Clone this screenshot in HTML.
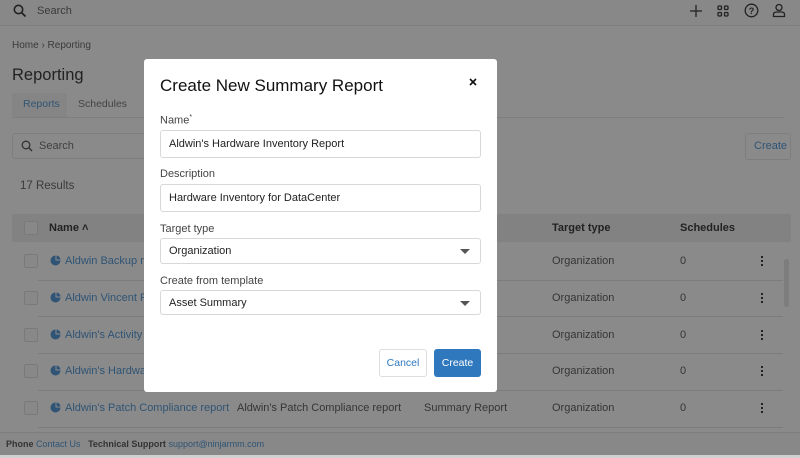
<!DOCTYPE html>
<html style="background:#8a8a8a"><head><style>
*{box-sizing:border-box;margin:0;padding:0}
html,body{background:#8a8a8a}
body{width:800px;height:458px;overflow:hidden;font-family:"Liberation Sans",sans-serif;position:relative;color:#333}
.a{position:absolute}
.t{font-size:11px;color:#353535;white-space:nowrap}
.lnk{color:#2f5475}
.cb{width:14px;height:14px;border:1px solid #7a7a7a;border-radius:2px;background:#888}
.sep{left:38px;width:745px;height:1px;background:#7c7c7c}
.m{background:#fff;border-radius:3px;left:144px;top:59px;width:353px;height:333px}
.lbl{font-size:11px;color:#444}
.inp{border:1px solid #d8d8d8;border-radius:3px;background:#fff;font-size:11px;color:#222;padding-left:8px;display:flex;align-items:center}
.car{position:absolute;right:10px;top:50%;margin-top:-2px;border-left:5px solid transparent;border-right:5px solid transparent;border-top:5px solid #555}
.dots{width:3px;font-size:0}
.dots i{display:block;width:2px;height:2px;background:#222;margin-bottom:2px}
</style></head><body>
<div class="a" style="left:0;top:0;width:800px;height:458px;background:#8a8a8a"></div>
<div class="a" style="left:0;top:0;width:800px;height:26px;background:#888;border-bottom:1px solid #7e7e7e"></div>
<svg class="a" style="left:13px;top:4px" width="14" height="14" viewBox="0 0 14 14"><circle cx="5.5" cy="5.5" r="4.2" fill="none" stroke="#222" stroke-width="1.6"/><path d="M8.5 8.5L12.5 12.5" stroke="#222" stroke-width="1.8"/></svg>
<div class="a t" style="left:37px;top:5px;color:#3a3a3a">Search</div>
<svg class="a" style="left:690px;top:5px" width="12" height="12"><path d="M6 0V12M0 6H12" stroke="#222" stroke-width="1.3"/></svg>
<svg class="a" style="left:717px;top:5px" width="12" height="12"><g fill="none" stroke="#222" stroke-width="1.3"><rect x="1" y="1" width="3.5" height="3.5" rx="1"/><rect x="7.5" y="1" width="3.5" height="3.5" rx="1"/><rect x="1" y="7.5" width="3.5" height="3.5" rx="1"/><rect x="7.5" y="7.5" width="3.5" height="3.5" rx="1"/></g></svg>
<svg class="a" style="left:744px;top:3px" width="15" height="15"><circle cx="7.5" cy="7.5" r="6.3" fill="none" stroke="#222" stroke-width="1.3"/><text x="7.5" y="11" font-size="9" text-anchor="middle" fill="#222" font-family="Liberation Sans" font-weight="bold">?</text></svg>
<svg class="a" style="left:772px;top:3px" width="14" height="15"><circle cx="7" cy="4.5" r="3" fill="none" stroke="#222" stroke-width="1.3"/><path d="M1.5 13.5V11.5Q1.5 9 4.5 9H9.5Q12.5 9 12.5 11.5V13.5Z" fill="none" stroke="#222" stroke-width="1.3"/></svg>
<div class="a t" style="left:12px;top:40px;font-size:10px;color:#3a3a3a">Home › Reporting</div>
<div class="a" style="left:12px;top:66px;font-size:16.5px;color:#222">Reporting</div>
<div class="a" style="left:12px;top:93px;width:55px;height:24px;background:#858585"></div>
<div class="a t lnk" style="left:23px;top:98px;font-size:10.5px">Reports</div>
<div class="a t" style="left:78px;top:98px;font-size:10.5px;color:#444">Schedules</div>
<div class="a" style="left:12px;top:117px;width:772px;height:1px;background:#7e7e7e"></div>
<div class="a" style="left:12px;top:133px;width:140px;height:26px;border:1px solid #7e7e7e;border-radius:3px"></div>
<svg class="a" style="left:21px;top:140px" width="12" height="12"><circle cx="5" cy="5" r="3.8" fill="none" stroke="#333" stroke-width="1.3"/><path d="M7.8 7.8L11 11" stroke="#333" stroke-width="1.4"/></svg>
<div class="a t" style="left:39px;top:140px;color:#3f3f3f">Search</div>
<div class="a" style="left:745px;top:133px;width:46px;height:27px;border:1px solid #7e7e7e;border-radius:3px"></div>
<div class="a t lnk" style="left:754px;top:140px">Create</div>
<div class="a t" style="left:20px;top:180px;font-size:11.5px;color:#3a3a3a">17 Results</div>
<div class="a" style="left:12px;top:214px;width:779px;height:28px;background:#828282"></div>
<div class="a cb" style="left:24px;top:221px"></div>
<div class="a t" style="left:49px;top:222px;font-weight:bold;color:#222">Name ˄</div>
<div class="a t" style="left:552px;top:222px;font-weight:bold;color:#222">Target type</div>
<div class="a t" style="left:680px;top:222px;font-weight:bold;color:#222">Schedules</div>

<div class="a" style="left:784px;top:259px;width:5px;height:48px;border-radius:3px;background:#7d7d7d"></div>

<div class="a cb" style="left:24px;top:254px"></div><div class="a cb" style="left:24px;top:291px"></div><div class="a cb" style="left:24px;top:328px"></div><div class="a cb" style="left:24px;top:364px"></div><div class="a cb" style="left:24px;top:401px"></div>
<div class="a sep" style="top:280px"></div><div class="a sep" style="top:316px"></div><div class="a sep" style="top:353px"></div><div class="a sep" style="top:390px"></div><div class="a sep" style="top:427px"></div>
<svg class="a" style="left:50px;top:255px" width="11" height="11"><path d="M5.5 0.5A5 5 0 1 0 10.5 5.5H5.5Z M6.5 0.5V4.5H10.5A4.5 4.5 0 0 0 6.5 0.5Z" fill="#2f5475"/></svg>
<svg class="a" style="left:50px;top:292px" width="11" height="11"><path d="M5.5 0.5A5 5 0 1 0 10.5 5.5H5.5Z M6.5 0.5V4.5H10.5A4.5 4.5 0 0 0 6.5 0.5Z" fill="#2f5475"/></svg>
<svg class="a" style="left:50px;top:329px" width="11" height="11"><path d="M5.5 0.5A5 5 0 1 0 10.5 5.5H5.5Z M6.5 0.5V4.5H10.5A4.5 4.5 0 0 0 6.5 0.5Z" fill="#2f5475"/></svg>
<svg class="a" style="left:50px;top:365px" width="11" height="11"><path d="M5.5 0.5A5 5 0 1 0 10.5 5.5H5.5Z M6.5 0.5V4.5H10.5A4.5 4.5 0 0 0 6.5 0.5Z" fill="#2f5475"/></svg>
<svg class="a" style="left:50px;top:402px" width="11" height="11"><path d="M5.5 0.5A5 5 0 1 0 10.5 5.5H5.5Z M6.5 0.5V4.5H10.5A4.5 4.5 0 0 0 6.5 0.5Z" fill="#2f5475"/></svg>
<div class="a t lnk" style="left:65px;top:255px">Aldwin Backup report</div>
<div class="a t lnk" style="left:65px;top:292px">Aldwin Vincent Report</div>
<div class="a t lnk" style="left:65px;top:329px">Aldwin's Activity Report</div>
<div class="a t lnk" style="left:65px;top:365px">Aldwin's Hardware Report</div>
<div class="a t lnk" style="left:65px;top:402px">Aldwin's Patch Compliance report</div>
<div class="a t" style="left:237px;top:402px">Aldwin's Patch Compliance report</div>
<div class="a t" style="left:424px;top:402px">Summary Report</div>
<div class="a t" style="left:552px;top:255px">Organization</div><div class="a t" style="left:552px;top:292px">Organization</div><div class="a t" style="left:552px;top:329px">Organization</div><div class="a t" style="left:552px;top:365px">Organization</div><div class="a t" style="left:552px;top:402px">Organization</div>
<div class="a t" style="left:680px;top:255px">0</div><div class="a t" style="left:680px;top:292px">0</div><div class="a t" style="left:680px;top:329px">0</div><div class="a t" style="left:680px;top:365px">0</div><div class="a t" style="left:680px;top:402px">0</div>
<div class="a dots" style="left:761px;top:256px"><i></i><i></i><i></i></div><div class="a dots" style="left:761px;top:293px"><i></i><i></i><i></i></div><div class="a dots" style="left:761px;top:330px"><i></i><i></i><i></i></div><div class="a dots" style="left:761px;top:366px"><i></i><i></i><i></i></div><div class="a dots" style="left:761px;top:403px"><i></i><i></i><i></i></div>

<div class="a" style="left:0;top:432px;width:800px;height:23px;background:#888;border-top:1px solid #7e7e7e"></div>
<div class="a t" style="left:6px;top:439px;font-size:9px;color:#333"><b>Phone</b> <span class="lnk">Contact Us</span> &nbsp; <b>Technical Support</b> <span class="lnk">support@ninjarmm.com</span></div>
<div class="a" style="left:0;top:455px;width:800px;height:3px;background:#d0d0d0"></div>

<div class="a m"></div>
<div class="a" style="left:160px;top:76px;font-size:17px;color:#111">Create New Summary Report</div>
<svg class="a" style="left:469px;top:78px" width="8" height="8"><path d="M1 1L7 7M7 1L1 7" stroke="#111" stroke-width="1.6"/></svg>
<div class="a lbl" style="left:160px;top:114px">Name<sup style="font-size:7px">*</sup></div>
<div class="a inp" style="left:160px;top:130px;width:321px;height:28px">Aldwin's Hardware Inventory Report</div>
<div class="a lbl" style="left:160px;top:168px">Description</div>
<div class="a inp" style="left:160px;top:184px;width:321px;height:28px">Hardware Inventory for DataCenter</div>
<div class="a lbl" style="left:160px;top:223px">Target type</div>
<div class="a inp" style="left:160px;top:238px;width:321px;height:26px">Organization<span class="car"></span></div>
<div class="a lbl" style="left:160px;top:275px">Create from template</div>
<div class="a inp" style="left:160px;top:290px;width:321px;height:25px">Asset Summary<span class="car"></span></div>
<div class="a" style="left:379px;top:349px;width:48px;height:28px;border:1px solid #ddd;border-radius:3px;font-size:10.5px;color:#2f78be;display:flex;align-items:center;justify-content:center">Cancel</div>
<div class="a" style="left:434px;top:349px;width:47px;height:28px;background:#2f78be;border-radius:3px;font-size:10.5px;color:#fff;display:flex;align-items:center;justify-content:center">Create</div>
</body></html>
